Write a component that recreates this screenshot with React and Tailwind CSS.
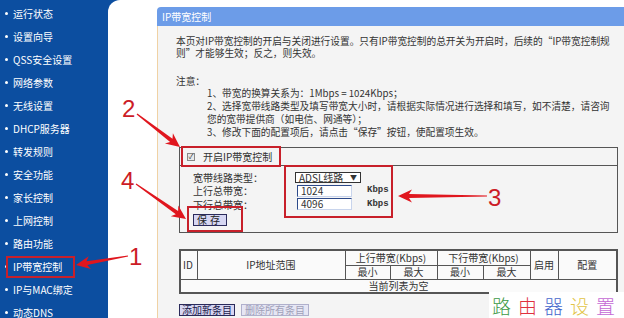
import React from 'react'

const menu = [
  '运行状态',
  '设置向导',
  'QSS安全设置',
  '网络参数',
  '无线设置',
  'DHCP服务器',
  '转发规则',
  '安全功能',
  '家长控制',
  '上网控制',
  '路由功能',
  'IP带宽控制',
  'IP与MAC绑定',
  '动态DNS',
]

const cjk = { fontFamily: '"Noto Sans CJK SC", "Noto Sans", sans-serif' }
const mono = { fontFamily: '"Liberation Mono", monospace' }

function arrowPoints(x1, y1, x2, y2, hl = 14, hw = 13, sw = 4) {
  const dx = x2 - x1
  const dy = y2 - y1
  const len = Math.hypot(dx, dy)
  const ux = dx / len
  const uy = dy / len
  const nx = -uy
  const ny = ux
  const bx = x2 - ux * hl
  const by = y2 - uy * hl
  const nb = 3
  const pts = [
    [x1 + nx * 0.6, y1 + ny * 0.6],
    [bx + ux * nb + nx * (sw / 2), by + uy * nb + ny * (sw / 2)],
    [bx + nx * (hw / 2), by + ny * (hw / 2)],
    [x2, y2],
    [bx - nx * (hw / 2), by - ny * (hw / 2)],
    [bx + ux * nb - nx * (sw / 2), by + uy * nb - ny * (sw / 2)],
    [x1 - nx * 0.6, y1 - ny * 0.6],
  ]
  return pts.map((p) => p.map((v) => v.toFixed(1)).join(',')).join(' ')
}

function Annotations() {
  const red = '#e0161e'
  const box = '#c8202a'
  return (
    <svg className="absolute inset-0 pointer-events-none" width="624" height="318" viewBox="0 0 624 318">
      <rect x="7" y="257" width="67" height="20" fill="none" stroke={box} strokeWidth="2" />
      <rect x="182" y="147" width="98" height="19" fill="none" stroke={box} strokeWidth="2" />
      <rect x="285" y="166" width="107" height="51" fill="none" stroke={box} strokeWidth="2" />
      <rect x="188" y="207" width="54" height="24" fill="none" stroke={box} strokeWidth="2" />
      <polygon points={arrowPoints(128, 256, 76, 265)} fill={red} />
      <polygon points={arrowPoints(137, 114, 180, 147)} fill={red} />
      <polygon points={arrowPoints(487, 196, 398, 196)} fill={red} />
      <polygon points={arrowPoints(136, 184, 186, 219)} fill={red} />
      <g fill="#cc1c26" fontSize="24" fontFamily='"Liberation Sans", Arial, sans-serif'>
        <text x="129" y="265">1</text>
        <text x="122" y="117">2</text>
        <text x="488" y="206">3</text>
        <text x="121" y="189">4</text>
      </g>
    </svg>
  )
}

export default function App() {
  return (
    <div className="relative w-[624px] h-[318px] overflow-hidden flex bg-[#0c4ea0] text-[10px]" style={cjk}>
      <div className="w-[108px] shrink-0 pt-[2px] text-white">
        {menu.map((m) => (
          <div key={m} className="h-[23px] flex items-center">
            <span className="ml-[5px] mr-[5px] w-[3px] h-[3px] bg-white rounded-full" />
            <span className="leading-none whitespace-nowrap">{m}</span>
          </div>
        ))}
      </div>

      <div className="flex-1 bg-white rounded-tl-[12px] pl-[49px] pt-[7px] flex">
        <div className="w-[480px] shrink-0 flex flex-col">
          <div className="h-[19px] bg-[#6c9ce8] rounded-tl-[4px] text-white flex items-center pl-[5px]">IP带宽控制</div>
          <div className="flex-1 bg-[#f4f4f4] border-l border-[#f0d2a4] pl-[18px] pt-[9px] text-[#333]">
            <div className="text-[9.7px]">
              <div className="leading-[12px] whitespace-nowrap">
                本页对IP带宽控制的开启与关闭进行设置。只有IP带宽控制的总开关为开启时，后续的“IP带宽控制规
              </div>
              <div className="leading-[12px] whitespace-nowrap">则”才能够生效；反之，则失效。</div>
              <div className="mt-[16px] leading-[12px]">注意：</div>
              <div className="pl-[31px] leading-[13px] whitespace-nowrap">
                <div>1、带宽的换算关系为：1Mbps = 1024Kbps；</div>
                <div>2、选择宽带线路类型及填写带宽大小时，请根据实际情况进行选择和填写，如不清楚，请咨询</div>
                <div>您的宽带提供商（如电信、网通等）；</div>
                <div>3、修改下面的配置项后，请点击“保存”按钮，使配置项生效。</div>
              </div>
            </div>

            <div className="mt-[8px] ml-[3px] w-[439px] border border-[#555]">
              <div className="h-[18px] flex items-center border-b border-[#555] pl-[7px]">
                <span className="w-[8px] h-[8px] border border-[#888] bg-[#e8e8e8] flex items-center justify-center text-[7px] leading-none text-[#333]">✓</span>
                <span className="ml-[8px]">开启IP带宽控制</span>
              </div>
              <div className="pl-[13px] pt-[5px] pb-[6px]">
                <div className="grid grid-cols-[102px_auto_auto] items-center w-fit">
                  <div className="h-[13px] leading-[13px]">宽带线路类型：</div>
                  <div className="h-[13px] flex items-center">
                    <div className="w-[66px] h-[11px] border border-[#333] bg-white flex items-center justify-between px-[3px] leading-none text-[10px]">
                      <span>ADSL线路</span>
                      <span className="text-[7px]">▼</span>
                    </div>
                  </div>
                  <div />
                  <div className="h-[13px] leading-[13px]">上行总带宽：</div>
                  <div className="h-[13px] flex items-center pl-[2px]">
                    <div className="w-[55px] h-[12px] border border-[#2d4a8a] border-r-[#c8d4ec] border-b-[#c8d4ec] bg-white pl-[3px] leading-[10px]">1024</div>
                  </div>
                  <div className="pl-[6px] text-[9px] font-bold" style={mono}>Kbps</div>
                  <div className="h-[13px] leading-[13px]">下行总带宽：</div>
                  <div className="h-[13px] flex items-center pl-[2px]">
                    <div className="w-[55px] h-[12px] border border-[#2d4a8a] border-r-[#c8d4ec] border-b-[#c8d4ec] bg-white pl-[3px] leading-[10px]">4096</div>
                  </div>
                  <div className="pl-[6px] text-[9px] font-bold" style={mono}>Kbps</div>
                </div>
                <div className="mt-[3px] w-[34px] h-[12px] border border-[#2a2a5a] bg-[#d6d6f2] flex items-center justify-center leading-none tracking-[3px] text-[#222]">
                  保存
                </div>
              </div>
            </div>

            <table className="mt-[16px] ml-[3px] w-[439px] border-collapse border-2 border-[#555] bg-[#fafafa] text-center leading-none">
              <tbody>
                <tr className="h-[15px]">
                  <td rowSpan={2} className="w-[17px] border border-[#555] text-left pl-[2px]">ID</td>
                  <td rowSpan={2} className="w-[148px] border border-[#555]">IP地址范围</td>
                  <td colSpan={2} className="border border-[#555]">上行带宽(Kbps)</td>
                  <td colSpan={2} className="border border-[#555]">下行带宽(Kbps)</td>
                  <td rowSpan={2} className="w-[28px] border border-[#555]">启用</td>
                  <td rowSpan={2} className="border border-[#555]">配置</td>
                </tr>
                <tr className="h-[14px]">
                  <td className="w-[45px] border border-[#555]">最小</td>
                  <td className="w-[47px] border border-[#555]">最大</td>
                  <td className="w-[46px] border border-[#555]">最小</td>
                  <td className="w-[47px] border border-[#555]">最大</td>
                </tr>
                <tr className="h-[14px]">
                  <td colSpan={8} className="border border-[#555]">当前列表为空</td>
                </tr>
              </tbody>
            </table>

            <div className="mt-[10px] ml-[3px] flex gap-[6px]">
              <div className="h-[12px] px-[2px] border border-[#2a2a5a] bg-[#d6d6f2] flex items-center leading-none text-[#1a1a4a]">添加新条目</div>
              <div className="h-[12px] px-[3px] border border-[#b0b0cc] bg-[#e6e6f4] flex items-center leading-none text-[#a0a0b8]">删除所有条目</div>
            </div>
          </div>
        </div>
      </div>

      <div className="absolute left-[489px] top-[292px] w-[135px] h-[26px] bg-white flex items-center pl-[3px] gap-[7px] text-[19px] leading-none font-light">
        <span className="text-[#3c9a46]">路</span>
        <span className="text-[#e0303e]">由</span>
        <span className="text-[#4466cc]">器</span>
        <span className="text-[#e2c446]">设</span>
        <span className="text-[#c468d4]">置</span>
      </div>

      <Annotations />
    </div>
  )
}
